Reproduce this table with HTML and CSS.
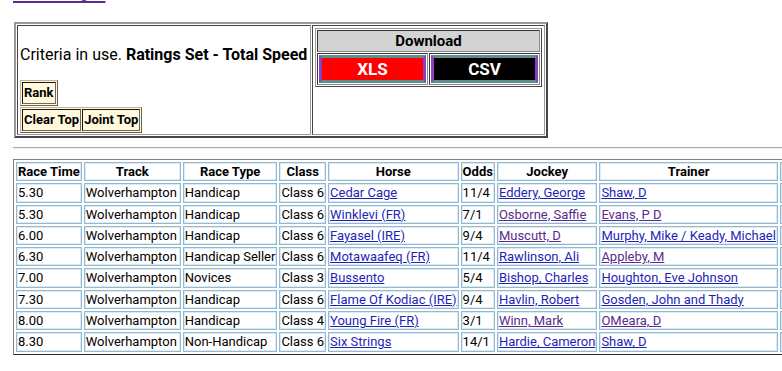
FILE: index.html
```html
<!DOCTYPE html>
<html>
<head>
<meta charset="utf-8">
<title>Ratings</title>
<link rel="stylesheet" href="styles.css">
</head>
<body>
<div class="wrap">
  <div class="crumb"><a href="#">Select Pages</a></div>

  <table class="criteria">
    <tr>
      <td class="crit-left">
        <div class="crit-text">Criteria in use. <b>Ratings Set - Total Speed</b></div>
        <table class="btns"><tr><td>Rank</td></tr></table>
        <table class="btns"><tr><td>Clear Top</td><td>Joint Top</td></tr></table>
      </td>
      <td class="crit-right">
        <table class="download">
          <tr><td colspan="2" class="dl-head">Download</td></tr>
          <tr>
            <td class="dl-cell"><div class="dl-btn xls">XLS</div></td>
            <td class="dl-cell"><div class="dl-btn csv">CSV</div></td>
          </tr>
        </table>
      </td>
    </tr>
  </table>

  <hr class="rule">

  <table class="races">
    <tr>
      <th>Race Time</th><th class="track">Track</th><th>Race Type</th><th>Class</th><th>Horse</th><th>Odds</th><th>Jockey</th><th>Trainer</th><th>Rating</th>
    </tr>
    <tr><td>5.30</td><td>Wolverhampton</td><td>Handicap</td><td>Class 6</td><td><a href="#">Cedar Cage</a></td><td>11/4</td><td><a href="#">Eddery, George</a></td><td><a href="#">Shaw, D</a></td><td>0</td></tr>
    <tr><td>5.30</td><td>Wolverhampton</td><td>Handicap</td><td>Class 6</td><td><a href="#">Winklevi (FR)</a></td><td>7/1</td><td><a href="#" class="v">Osborne, Saffie</a></td><td><a href="#" class="v">Evans, P D</a></td><td>0</td></tr>
    <tr><td>6.00</td><td>Wolverhampton</td><td>Handicap</td><td>Class 6</td><td><a href="#">Fayasel (IRE)</a></td><td>9/4</td><td><a href="#" class="v">Muscutt, D</a></td><td><a href="#">Murphy, Mike / Keady, Michael</a></td><td>0</td></tr>
    <tr><td>6.30</td><td>Wolverhampton</td><td>Handicap Seller</td><td>Class 6</td><td><a href="#">Motawaafeq (FR)</a></td><td>11/4</td><td><a href="#">Rawlinson, Ali</a></td><td><a href="#" class="v">Appleby, M</a></td><td>0</td></tr>
    <tr><td>7.00</td><td>Wolverhampton</td><td>Novices</td><td>Class 3</td><td><a href="#">Bussento</a></td><td>5/4</td><td><a href="#">Bishop, Charles</a></td><td><a href="#">Houghton, Eve Johnson</a></td><td>0</td></tr>
    <tr><td>7.30</td><td>Wolverhampton</td><td>Handicap</td><td>Class 6</td><td><a href="#">Flame Of Kodiac (IRE)</a></td><td>9/4</td><td><a href="#">Havlin, Robert</a></td><td><a href="#">Gosden, John and Thady</a></td><td>0</td></tr>
    <tr><td>8.00</td><td>Wolverhampton</td><td>Handicap</td><td>Class 4</td><td><a href="#">Young Fire (FR)</a></td><td>3/1</td><td><a href="#" class="v">Winn, Mark</a></td><td><a href="#" class="v">OMeara, D</a></td><td>0</td></tr>
    <tr><td>8.30</td><td>Wolverhampton</td><td>Non-Handicap</td><td>Class 6</td><td><a href="#">Six Strings</a></td><td>14/1</td><td><a href="#">Hardie, Cameron</a></td><td><a href="#">Shaw, D</a></td><td>0</td></tr>
  </table>
</div>
</body>
</html>
```
FILE: styles.css
```css
html, body {
  margin: 0;
  padding: 0;
  background: #ffffff;
  overflow: hidden;
}

body {
  font-family: Roboto, "Liberation Sans", sans-serif;
  color: #000000;
}

.wrap {
  padding-left: 13px;
  width: 1000px;
}

a {
  color: #1f1fb8;
}

a.v {
  color: #5b2a8c;
}

.crumb {
  margin-top: -16px;
  font-size: 16px;
  line-height: 18px;
  height: 16px;
}

.crumb a {
  color: #5b2a8c;
  text-decoration-thickness: 2px;
  text-underline-offset: 3px;
}

/* criteria box */
.criteria {
  margin-top: 22px;
  margin-left: 1px;
  border: 2px outset #9a9a9a;
  border-spacing: 1px;
  width: 534px;
}

.criteria > tbody > tr > td,
.criteria > tr > td {
  border: 1px inset #9a9a9a;
  padding: 0;
}

.criteria > tbody > tr > td.crit-left {
  vertical-align: top;
  width: 290px;
  padding: 0 1px 1px 1px;
}

.crit-text {
  font-size: 16px;
  line-height: 19px;
  margin-top: 19px;
  margin-bottom: 16px;
  padding-left: 1px;
}

.criteria > tbody > tr > td.crit-right {
  vertical-align: top;
  padding: 2px;
}

.btns {
  border: 1px outset #b9b39c;
  border-spacing: 1px;
  background: #fff8dc;
  margin-left: 1px;
}

.btns td {
  border: 1px inset #6d6a5c;
  font-size: 13px;
  font-weight: bold;
  line-height: 16px;
  padding: 2px 1px;
}

.btns + .btns {
  margin-top: 1px;
}

/* download box */
.download {
  width: 100%;
  border: 1px outset #9a9a9a;
  border-spacing: 1px;
}

.dl-head {
  background: #d3d3d3;
  border: 1px inset #8a8a8a;
  text-align: center;
  font-size: 15px;
  font-weight: bold;
  line-height: 20px;
  padding: 0;
}

.dl-cell {
  border: 1px inset #8a8a8a;
  padding: 1px;
  width: 50%;
}

.dl-btn {
  font-size: 17px;
  font-weight: bold;
  color: #ffffff;
  text-align: center;
  line-height: 20px;
  padding: 1px 0;
  border-style: solid;
  border-width: 3px;
  border-color: #5e8f8c #8b3fc2 #5e8f8c #8b3fc2;
}

.xls {
  background: #ff0000;
}

.csv {
  background: #000000;
}

.rule {
  margin: 9px 0 0 0;
  width: 769px;
  border: 0;
  border-top: 1px solid #a9a9a9;
  border-bottom: 1px solid #eeeeee;
  height: 0;
}

/* data table */
.races {
  margin-top: 10px;
  border: 1px outset #808080;
  border-spacing: 2px;
  font-size: 13px;
}

.races th,
.races td {
  border: 1px solid #93b8cf;
  box-shadow: inset 0 0 0 1px #d9ecf6;
  padding: 1px;
  line-height: 15.3px;
  white-space: nowrap;
}

.races th.track {
  width: 93px;
}

.races th {
  font-weight: bold;
  text-align: center;
}

.races td {
  text-align: left;
}
```
